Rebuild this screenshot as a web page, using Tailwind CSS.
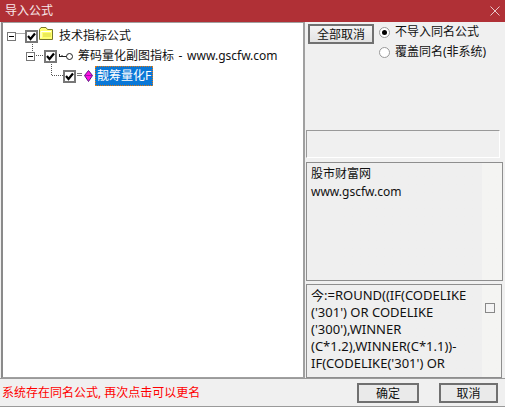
<!DOCTYPE html>
<html lang="zh-CN">
<head>
<meta charset="UTF-8">
<title>导入公式</title>
<script src="https://cdn.jsdelivr.net/npm/@tailwindcss/browser@4"></script>
</head>
<body class="m-0 bg-[#f0f0f0]">
<div class="flex flex-col w-[505px] h-[407px] overflow-hidden border-b border-[#9a9a9a] font-['Noto_Sans','Noto_Sans_CJK_SC',sans-serif] text-[12px] text-[#111]">

  <!-- title bar -->
  <div class="flex items-center justify-between h-[22px] shrink-0 bg-[#b03036] pl-[5px] pr-[5px] text-white/90">
    <span>导入公式</span>
    <svg width="10" height="10" viewBox="0 0 10 10"><path d="M0.5 0.5L9.5 9.5M9.5 0.5L0.5 9.5" stroke="#e8c8ca" stroke-width="1"/></svg>
  </div>

  <div class="flex flex-1 min-h-0">
    <!-- tree -->
    <div class="relative w-[304px] shrink-0 border-l-2 border-r-2 border-t border-b border-[#a0a0a0] border-l-[#8a8a8a] bg-white ml-[1px] pt-[3px]">
      <svg class="absolute left-0 top-0" width="100" height="70">
        <path d="M13.5 10.5H22M29.5 21V28M31 32.5H41M48.5 41V52.5H60" fill="none" stroke="#555" stroke-dasharray="1 1"/>
        <path d="M74 50.5H79M74 52.5H79" stroke="#777"/>
      </svg>
      <div class="flex items-center h-[20px] relative">
        <span class="flex items-center justify-center w-[9px] h-[9px] border border-[#777] ml-[4px] bg-white"><span class="w-[5px] h-px bg-black"></span></span>
        <span class="flex items-center justify-center w-[13px] h-[13px] border-2 border-[#777] bg-white ml-[9px]">
          <svg width="9" height="9" viewBox="0 0 9 9"><path d="M1 4L3.5 7L8 1.5" fill="none" stroke="#000" stroke-width="2.2"/></svg>
        </span>
        <svg width="14" height="14" viewBox="0 0 14 14" class="ml-[1px] -mt-[6px]"><path d="M0.5 3.5L2 1.5H7L8.5 3.5H13.5V13.5H0.5Z" fill="#ffff70" stroke="#77772a"/><path d="M2 12V5.5H12" fill="none" stroke="#fff"/><path d="M4 8H12M4 10H12" stroke="#d8d840"/></svg>
        <span class="ml-[6px]">技术指标公式</span>
      </div>
      <div class="flex items-center h-[20px] relative pl-[23px]">
        <span class="flex items-center justify-center w-[9px] h-[9px] border border-[#777] bg-white"><span class="w-[5px] h-px bg-black"></span></span>
        <span class="flex items-center justify-center w-[13px] h-[13px] border-2 border-[#777] bg-white ml-[9px]">
          <svg width="9" height="9" viewBox="0 0 9 9"><path d="M1 4L3.5 7L8 1.5" fill="none" stroke="#000" stroke-width="2.2"/></svg>
        </span>
        <svg width="16" height="9" viewBox="0 0 16 9" class="ml-[1px]"><circle cx="11.5" cy="4.5" r="3" fill="#fff" stroke="#222"/><path d="M8.5 4.5H1M1.5 2V5M4 3V5" fill="none" stroke="#222"/></svg>
        <span class="ml-[4px] whitespace-nowrap [word-spacing:1.5px]">筹码量化副图指标 - www.gscfw.com</span>
      </div>
      <div class="flex items-center h-[20px] relative pl-[60px]">
        <span class="flex items-center justify-center w-[13px] h-[13px] border-2 border-[#777] bg-white">
          <svg width="9" height="9" viewBox="0 0 9 9"><path d="M1 4L3.5 7L8 1.5" fill="none" stroke="#000" stroke-width="2.2"/></svg>
        </span>
        <svg width="9" height="12" viewBox="0 0 9 12" class="ml-[8px]"><path d="M4.5 0.5L8.5 5.5L4.5 11.5L0.5 5.5Z" fill="#ff10e0" stroke="#5a1a80"/><path d="M0.5 5.5H8.5" stroke="#a010b0"/></svg>
        <span class="ml-[2px] px-[2px] h-[20px] leading-[19px] bg-[#0a78d7] text-white outline-1 outline-dotted outline-[#e07a10] -outline-offset-1">靓筹量化F</span>
      </div>
    </div>

    <!-- right column -->
    <div class="flex flex-col flex-1 min-w-0 pl-[1px] pr-[2px]">
      <div class="flex h-[108px] shrink-0 pt-[2px] pl-[2px]">
        <button class="w-[66px] h-[20px] border-2 border-[#707070] bg-gradient-to-b from-[#f4f4f4] to-[#e2e2e2] text-[12px]">全部取消</button>
        <div class="flex flex-col gap-[6px] ml-[5px] pt-[1px]">
          <div class="flex items-center h-[14px]">
            <span class="flex items-center justify-center w-[11px] h-[11px] rounded-full border border-[#999] bg-white"><span class="w-[5px] h-[5px] rounded-full bg-black"></span></span>
            <span class="ml-[5px] whitespace-nowrap">不导入同名公式</span>
          </div>
          <div class="flex items-center h-[14px]">
            <span class="w-[11px] h-[11px] rounded-full border border-[#999] bg-white"></span>
            <span class="ml-[5px] whitespace-nowrap">覆盖同名(非系统)</span>
          </div>
        </div>
      </div>
      <div class="h-[28px] mr-[3px] shrink-0 border-t border-l border-[#999] border-r-white border-b-white border-r border-b bg-[#f0f0f0]"></div>
      <div class="h-[119px] mt-[4px] shrink-0 border border-[#8e8e8e] pl-[4px] pt-[2px] leading-[18px] bg-gradient-to-r from-[#efefef] from-90% to-[#f4f4f2] to-90%">
        <p>股市财富网</p>
        <p>www.gscfw.com</p>
      </div>
      <div class="flex h-[94px] mt-[3px] mr-[1px] shrink-0 border border-[#8e8e8e] pl-[4px] pt-[2px] leading-[17px] bg-gradient-to-r from-[#efefef] from-90% to-[#f4f4f2] to-90%">
        <p class="w-[174px] shrink-0 text-[13px]">今:=ROUND((IF(CODELIKE<br>('301') OR CODELIKE<br>('300'),WINNER<br>(C*1.2),WINNER(C*1.1))-<br>IF(CODELIKE('301') OR</p>
        <span class="w-[10px] h-[10px] mt-[16px] border border-[#888] bg-[#f4f4f4]"></span>
      </div>
    </div>
  </div>

  <!-- status row -->
  <div class="flex items-center h-[28px] shrink-0 pl-[2px] text-[#f00] border-t border-[#9a9a9a]">
    <span class="flex-1 whitespace-nowrap">系统存在同名公式, 再次点击可以更名</span>
    <button class="w-[62px] h-[20px] border-2 border-[#707070] bg-[#eaeaea] text-[#111] text-[12px] mr-[20px]">确定</button>
    <button class="w-[59px] h-[20px] border-2 border-[#707070] bg-[#eaeaea] text-[#111] text-[12px] mr-[7px]">取消</button>
  </div>
</div>
</body>
</html>
